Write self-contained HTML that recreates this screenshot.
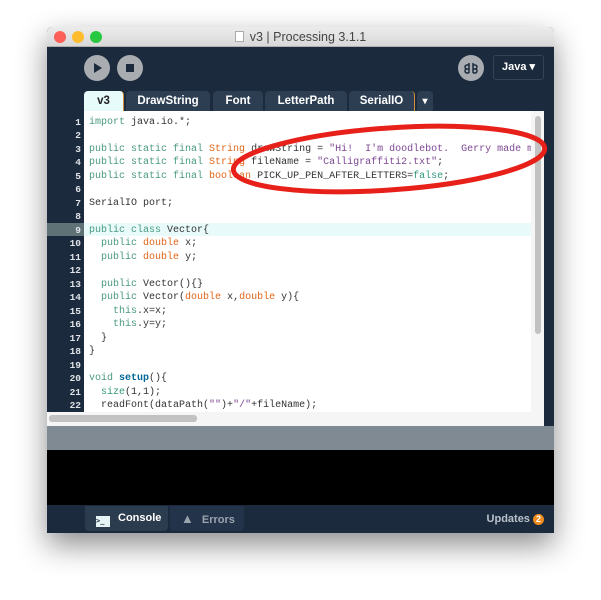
<!DOCTYPE html>
<html><head><style>
*{margin:0;padding:0;box-sizing:border-box}
body{width:601px;height:600px;background:#fff;position:relative;overflow:hidden;font-family:"Liberation Sans",sans-serif}
.win{position:absolute;left:47px;top:27px;width:507px;height:506px;background:#1b2a3c;box-shadow:0 12px 30px rgba(0,0,0,.45);border-radius:5px 5px 0 0;overflow:hidden}
.title{position:absolute;left:0;top:0;width:507px;height:20px;background:linear-gradient(#ececec,#d8d8d8);border-bottom:1px solid #b0b0b0;text-align:center;font-size:12.5px;line-height:20px;color:#444}
.dot{position:absolute;top:4px;width:12px;height:12px;border-radius:50%}
.btn{position:absolute;width:26px;height:26px;border-radius:50%;background:#a9adb2}
.tab{position:absolute;top:64px;height:21px;background:#2d3e52;color:#fff;font-weight:bold;font-size:11.5px;line-height:21px;text-align:center;border-radius:4px 4px 0 0}
.code{position:absolute;left:0;top:84px;width:497px;height:315px;background:#fff}
.gut{position:absolute;left:0;top:0;width:37px;height:315px;background:#1b2a3c}
.ln{position:absolute;left:2px;width:32px;text-align:right;font:bold 9.5px "Liberation Mono",monospace;color:#e0e4e8}
.tx{position:absolute;left:42px;white-space:pre;font:10px/13px "Liberation Mono",monospace;color:#333}
.k{color:#4a9a80}.t{color:#e2661a}.s{color:#7d4793}.f{color:#33997e}.b{color:#006699;font-weight:bold}
</style></head><body>
<div class="win">
<div class="title"><span class="dot" style="left:7px;background:#fc5f57"></span><span class="dot" style="left:25px;background:#fdbc2e"></span><span class="dot" style="left:43px;background:#28c840"></span>
<span style="display:inline-block;width:9px;height:11px;border:1px solid #aaa;background:#fff;vertical-align:-1px;margin-right:6px"></span>v3 | Processing 3.1.1</div>
<div class="btn" style="left:37px;top:28px"><svg width="26" height="26"><path d="M10 8 L18 13 L10 18Z" fill="#1b2a3c"/></svg></div>
<div class="btn" style="left:70px;top:28px"><svg width="26" height="26"><rect x="9" y="9" width="8" height="8" fill="#1b2a3c"/></svg></div>
<div class="btn" style="left:411px;top:28px"><svg width="26" height="26" fill="none" stroke="#1b2a3c" stroke-width="1.5"><path d="M11 8v10M15 8v10M11 10h-2a2 2 0 0 0 0 4h2M11 14h-2a2 2 0 0 0 0 4h2M15 10h2a2 2 0 0 1 0 4h-2M15 14h2a2 2 0 0 1 0 4h-2"/></svg></div>
<div style="position:absolute;left:446px;top:28px;width:51px;height:25px;border:1px solid #344558;border-radius:3px;color:#fff;font-size:11px;font-weight:bold;line-height:23px;text-align:center">Java ▾</div>
<div class="tab" style="left:37px;width:40px;background:#e6fbfa;color:#222;border-right:1px solid #d68b3a">v3</div>
<div class="tab" style="left:79px;width:84px">DrawString</div>
<div class="tab" style="left:166px;width:50px">Font</div>
<div class="tab" style="left:218px;width:82px">LetterPath</div>
<div class="tab" style="left:302px;width:66px;border-right:1px solid #d68b3a">SerialIO</div>
<div class="tab" style="left:370px;width:16px;font-size:10px">▾</div>
<div class="code">
<div style="position:absolute;left:37px;top:112px;width:447px;height:13px;background:#e8fbfa"></div>
<div class="gut"><div style="position:absolute;left:0;top:112px;width:37px;height:13px;background:#5f7276"></div></div>
<div id="lines"></div>
<div style="position:absolute;left:484px;top:0;width:13px;height:301px;background:#f5f5f5"></div>
<div style="position:absolute;left:488px;top:5px;width:6px;height:218px;background:#c2c2c2;border-radius:3px"></div>
<div style="position:absolute;left:0;top:301px;width:497px;height:14px;background:#f5f5f5"></div>
<div style="position:absolute;left:2px;top:304px;width:148px;height:7px;background:#c2c2c2;border-radius:3px"></div>
</div>
<div style="position:absolute;left:0;top:399px;width:507px;height:24px;background:#808a93"></div>
<div style="position:absolute;left:0;top:423px;width:507px;height:55px;background:#000"></div>
<div style="position:absolute;left:0;top:478px;width:507px;height:28px;background:#1b2a3c">
<div style="position:absolute;left:38px;top:1px;width:83px;height:25px;background:#2b3c4f;border-radius:0 0 4px 4px;color:#fff;font-size:11px;font-weight:bold;line-height:25px"><span style="display:inline-block;width:14px;height:11px;background:#e6f4f6;margin:0 8px 0 11px;vertical-align:-2px;font:bold 7px monospace;color:#1b2a3c;line-height:11px">&gt;_</span>Console</div>
<div style="position:absolute;left:123px;top:1px;width:74px;height:25px;background:#22334a;border-radius:0 0 4px 4px;color:#9aa4ad;font-size:11px;font-weight:bold;line-height:25px"><span style="margin:0 8px 0 11px;font-size:13px">▲</span>Errors</div>
<div style="position:absolute;right:10px;top:8px;color:#b8c2cc;font-size:11px;font-weight:bold">Updates <span style="display:inline-block;width:11px;height:11px;border-radius:50%;background:#f08a1c;color:#fff;font-size:9px;line-height:11px;text-align:center">2</span></div>
</div>
</div>
<svg style="position:absolute;left:0;top:0" width="601" height="600"><ellipse cx="389" cy="159" rx="156" ry="31" transform="rotate(-4 389 159)" fill="none" stroke="#e8201a" stroke-width="5"/></svg>
<script>
var L=['<span class="k">import</span> java.io.*;','','<span class="k">public static final</span> <span class="t">String</span> drawString = <span class="s">"Hi!  I\'m doodlebot.  Gerry made me</span>','<span class="k">public static final</span> <span class="t">String</span> fileName = <span class="s">"Calligraffiti2.txt"</span>;','<span class="k">public static final</span> <span class="t">boolean</span> PICK_UP_PEN_AFTER_LETTERS=<span class="f">false</span>;','','SerialIO port;','','<span class="k">public class</span> Vector{','  <span class="k">public</span> <span class="t">double</span> x;','  <span class="k">public</span> <span class="t">double</span> y;','','  <span class="k">public</span> Vector(){}','  <span class="k">public</span> Vector(<span class="t">double</span> x,<span class="t">double</span> y){','    <span class="k">this</span>.x=x;','    <span class="k">this</span>.y=y;','  }','}','','<span class="k">void</span> <span class="b">setup</span>(){','  <span class="f">size</span>(1,1);','  readFont(dataPath(<span class="s">""</span>)+<span class="s">"/"</span>+fileName);'];
var h='';for(var i=0;i<L.length;i++){var y=5+i*13.48;h+='<div class="ln" style="top:'+(y+1)+'px">'+(i+1)+'</div><div class="tx" style="top:'+y+'px">'+L[i]+'</div>';}
document.getElementById('lines').innerHTML=h;
</script>
</body></html>
